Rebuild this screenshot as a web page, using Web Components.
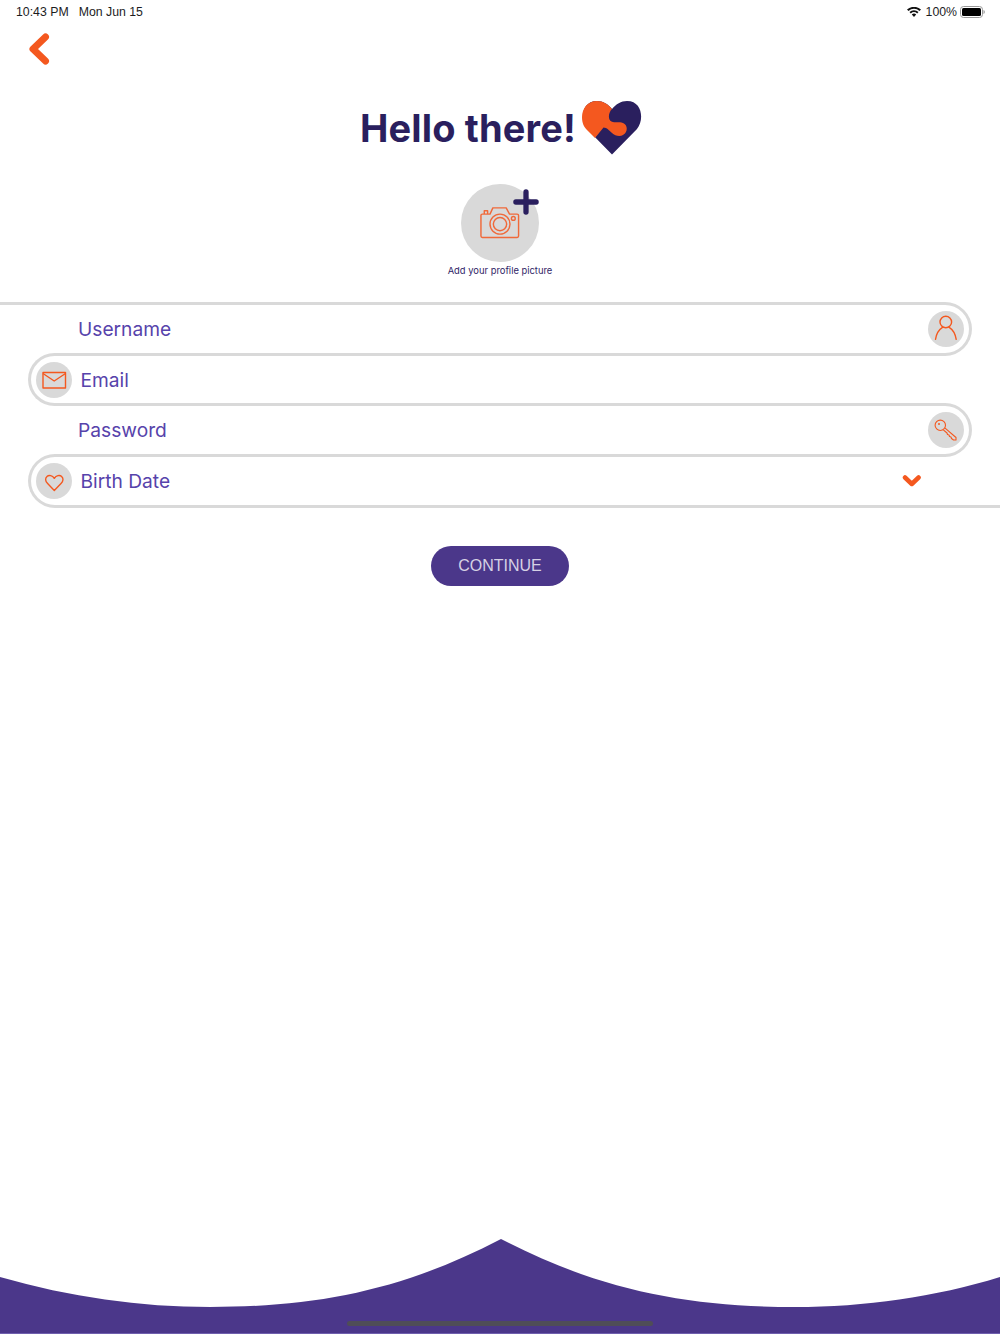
<!DOCTYPE html>
<html lang="en">
<head>
<meta charset="utf-8">
<title>Hello there</title>
<style>
  html, body { margin: 0; padding: 0; background: #fff; }
  body { font-family: 'Inter', 'Liberation Sans', sans-serif; }
  .screen { display: flex; flex-direction: column; height: 1334px; overflow: hidden; }
  form-list { margin-top: 22px; }
  pill-button { margin-top: 38px; align-self: center; }
  wave-footer { margin-top: auto; }
</style>
</head>
<body>
<div class="screen">
  <status-bar></status-bar>
  <back-button></back-button>
  <hello-title>Hello there!</hello-title>
  <avatar-picker>Add your profile picture</avatar-picker>
  <form-list>
    <snake-field side="right" lead>
      Username
      <svg slot="icon" viewBox="0 0 36 36" fill="none" stroke="#f4581f" stroke-width="1.400" stroke-linecap="round"><circle cx="17.800" cy="11" r="5.800"/><path d="M7.500 28.300C8.500 22 11 18.500 14.500 16.300M28.200 28.300C27.200 22 24.700 18.500 21.200 16.300"/></svg>
    </snake-field>
    <snake-field side="left">
      Email
      <svg slot="icon" viewBox="0 0 36 36" fill="none" stroke="#f4581f" stroke-width="1.400" stroke-linejoin="round"><rect x="7" y="10.500" width="22.500" height="15.500"/><path d="M7 11.500l11.200 7.500 11.300-7.500"/></svg>
    </snake-field>
    <snake-field side="right">
      Password
      <svg slot="icon" viewBox="0 0 36 36" fill="none" stroke="#f4581f" stroke-width="1.100" stroke-linejoin="round"><circle cx="12.300" cy="13.300" r="5.200"/><circle cx="11" cy="12" r="1" fill="#f4581f" stroke="none"/><path d="M16.800 15.800L28 25.500V28H25.500L23.500 26.500 23 25 21.500 24.500 21 23 19.500 22.500 19 21 15.300 17.800"/></svg>
    </snake-field>
    <snake-field side="left" tail>
      Birth Date
      <svg slot="icon" viewBox="0 0 36 36" fill="none" stroke="#f4581f" stroke-width="1.400" stroke-linejoin="round"><path d="M18.300 27.600l-6.700-7c-2.500-2.500-2.500-5.500-.7-7 2-1.800 5.500-1.200 7.400 1.700 1.900-2.900 5.400-3.500 7.400-1.700 1.800 1.500 1.800 4.500-.7 7z"/></svg>
      <svg slot="end" width="20" height="14" viewBox="0 0 20 14" fill="none" stroke="#f4581f" stroke-width="4.500" stroke-linecap="round" stroke-linejoin="round"><path d="M3 3.500l6.800 6.500 6.800-6.500"/></svg>
    </snake-field>
  </form-list>
  <pill-button>CONTINUE</pill-button>
  <wave-footer></wave-footer>
</div>

<script>
/**
 * Small helper, every element here only needs a static shadow root.
 *
 * @param {string} name - The tag name.
 * @param {string} html - The markup of the shadow root.
 */
function defineStatic (name, html) {
  customElements.define(name, class extends HTMLElement {
    constructor () {
      super()
      this.attachShadow({ mode: 'open' }).innerHTML = html
    }
  })
}

defineStatic('status-bar', `
  <style>
    :host {
      display: flex;
      justify-content: space-between;
      align-items: center;
      height: 24px;
      padding: 0 15px 0 16px;
      font: 12.300px/24px 'Liberation Sans', sans-serif;
      color: #1c1c1e;
    }
    .left { display: flex; gap: 10px; }
    .right { display: flex; align-items: center; }
    .pct { margin: 0 3px 0 5px; }
  </style>
  <div class="left"><span>10:43 PM</span><span>Mon Jun 15</span></div>
  <div class="right">
    <svg width="14" height="10" viewBox="0 0 14 10"><path fill="#111" d="M7 10L4.800 7.600a3.200 3.200 0 0 1 4.400 0zM3.800 6.500L2.500 5.100a6.600 6.600 0 0 1 9 0L10.200 6.500a4.700 4.700 0 0 0-6.400 0zM1.500 4L0 2.600a10.200 10.200 0 0 1 14 0L12.500 4a8.100 8.100 0 0 0-11 0z"/></svg>
    <span class="pct">100%</span>
    <svg width="25" height="12" viewBox="0 0 25 12"><rect x=".5" y=".5" width="22" height="11" rx="3" fill="none" stroke="#999"/><rect x="2" y="2" width="19" height="8" rx="1.500" fill="#000"/><path d="M23.500 4v4c.8-.3 1.300-1.100 1.300-2s-.5-1.700-1.300-2z" fill="#999"/></svg>
  </div>
`)

defineStatic('back-button', `
  <style>
    :host { display: block; height: 42px; padding: 6px 0 0 26px; }
    svg { display: block; }
  </style>
  <svg width="28" height="36" viewBox="0 0 28 36" fill="none" stroke="#f4581f" stroke-width="7" stroke-linecap="round" stroke-linejoin="round"><path d="M19.500 7L7 19l12.500 12"/></svg>
`)

defineStatic('hello-title', `
  <style>
    :host {
      display: flex;
      justify-content: center;
      align-items: flex-start;
      gap: 6px;
      margin-top: 29px;
      padding-left: 2px;
      height: 54px;
      color: #2a1f5e;
    }
    h1 {
      margin: 0;
      font: 700 38px/54px 'Inter', sans-serif;
      letter-spacing: .15px;
    }
    svg { display: block; }
  </style>
  <h1><slot></slot></h1>
  <svg width="60" height="54" viewBox="0 0 60 54">
    <path fill="#2a1f5e" d="M30 53.500L5 28C-2 20-1 0 15 0c6 0 11 3 15 8 4-5 9-8 15-8 16 0 17 20 10 28z"/>
    <path fill="#f4581f" d="M30 8C26 3 21 0 15 0 5 0 0 8 0 16c0 6 2 10 5 13l8 8 8.500-10.500c3.500 0 5.500 3 8.500 5.500 3 3 8 4 11 2 5-3 5-10 0-12-4-1.500-8 0-11.500-1.500C26 19 26 12 30 8z"/>
  </svg>
`)

defineStatic('avatar-picker', `
  <style>
    :host {
      display: flex;
      flex-direction: column;
      align-items: center;
      margin-top: 29px;
      color: #2f2566;
      font: 9.400px/18px 'Inter', sans-serif;
    }
    .pic {
      position: relative;
      width: 78px;
      height: 78px;
      border-radius: 50%;
      background: #d9d9d9;
      display: flex;
      align-items: center;
      justify-content: center;
    }
    .cam { margin-bottom: 1px; }
    .plus { position: absolute; left: 51.500px; top: 5px; }
  </style>
  <div class="pic">
    <svg class="cam" width="40" height="32.400" viewBox="0 0 42 34" fill="none" stroke="#f0693a" stroke-width="1.500" stroke-linejoin="round">
      <path d="M2.500 8.500h8l3-6.500h14l3.500 6.500h8a1.500 1.500 0 0 1 1.500 1.500v21.500a1.500 1.500 0 0 1-1.500 1.500H2.500A1.500 1.500 0 0 1 1 31.500V10a1.500 1.500 0 0 1 1.500-1.500z"/>
      <path d="M4.500 8.500V5h3.500v3.500"/>
      <circle cx="21" cy="19" r="10.500"/>
      <circle cx="21" cy="19" r="7"/>
      <circle cx="35" cy="13" r="2"/>
    </svg>
    <svg class="plus" width="26" height="26" viewBox="0 0 27 27" fill="none" stroke="#2a1f5e" stroke-width="5.500" stroke-linecap="round"><path d="M13.500 3v21M3 13.500h21"/></svg>
  </div>
  <span><slot></slot></span>
`)

/**
 * One row of the form. Rows overlap by their border so they read as one
 * line that snakes down the page.
 */
customElements.define('snake-field', class extends HTMLElement {
  constructor () {
    super()
    this.attachShadow({ mode: 'open' }).innerHTML = `
      <style>
        :host {
          display: flex;
          position: relative;
          align-items: center;
          box-sizing: border-box;
          height: 53.700px;
          margin-top: -3px;
          border: 3px solid #d9d9d9;
          color: #5743ab;
          font: 400 19.200px 'Inter', sans-serif;
        }
        :host([side="right"]) {
          margin-left: 54px;
          margin-right: 28px;
          border-left: 0;
          border-radius: 0 27px 27px 0;
          padding: 0 5px 0 24px;
        }
        :host([side="left"]) {
          margin-left: 28px;
          margin-right: 54px;
          border-right: 0;
          border-radius: 27px 0 0 27px;
          padding-left: 5px;
        }
        :host([lead])::before,
        :host([tail])::after {
          content: '';
          position: absolute;
          width: 54px;
          height: 3px;
          background: #d9d9d9;
        }
        :host([lead])::before { left: -54px; top: -3px; }
        :host([tail])::after { right: -54px; bottom: -3px; }
        .icon {
          flex: none;
          width: 36px;
          height: 36px;
          border-radius: 50%;
          background: #d9d9d9;
        }
        .icon ::slotted(svg) { display: block; width: 36px; height: 36px; }
        .label { flex: 1; }
        :host([side="left"]) .label { padding-left: 8.500px; }
        :host([side="right"]) .icon { order: 2; }
        .end { display: flex; padding-right: 24px; }
      </style>
      <div class="icon"><slot name="icon"></slot></div>
      <div class="label"><slot></slot></div>
      <div class="end"><slot name="end"></slot></div>
    `
  }
})

defineStatic('form-list', `
  <style>
    :host { display: block; padding-top: 3px; }
  </style>
  <slot></slot>
`)

defineStatic('pill-button', `
  <style>
    :host { display: block; }
    button {
      display: block;
      width: 138px;
      height: 40px;
      padding: 1px 0 0;
      border: 0;
      border-radius: 20px;
      background: #4b378a;
      color: #d6d1e4;
      font: 400 16px 'Liberation Sans', sans-serif;
      cursor: pointer;
    }
  </style>
  <button type="button"><slot></slot></button>
`)

defineStatic('wave-footer', `
  <style>
    :host { display: block; position: relative; height: 95px; }
    svg { display: block; }
    .home {
      position: absolute;
      left: 347px;
      top: 82px;
      width: 306px;
      height: 5px;
      border-radius: 3px;
      background: #4f4d57;
    }
    .edge {
      position: absolute;
      left: 0;
      right: 0;
      bottom: 0;
      height: 1px;
      background: #6f5fae;
    }
  </style>
  <svg width="1000" height="95" viewBox="0 0 1000 95"><path fill="#4b378a" d="M0 38C70 58 140 68 210 68 320 68 405 50 501 0 597 50 685 68 795 68 865 68 935 58 1000 38V95H0z"/></svg>
  <div class="home"></div>
  <div class="edge"></div>
`)
</script>
</body>
</html>
